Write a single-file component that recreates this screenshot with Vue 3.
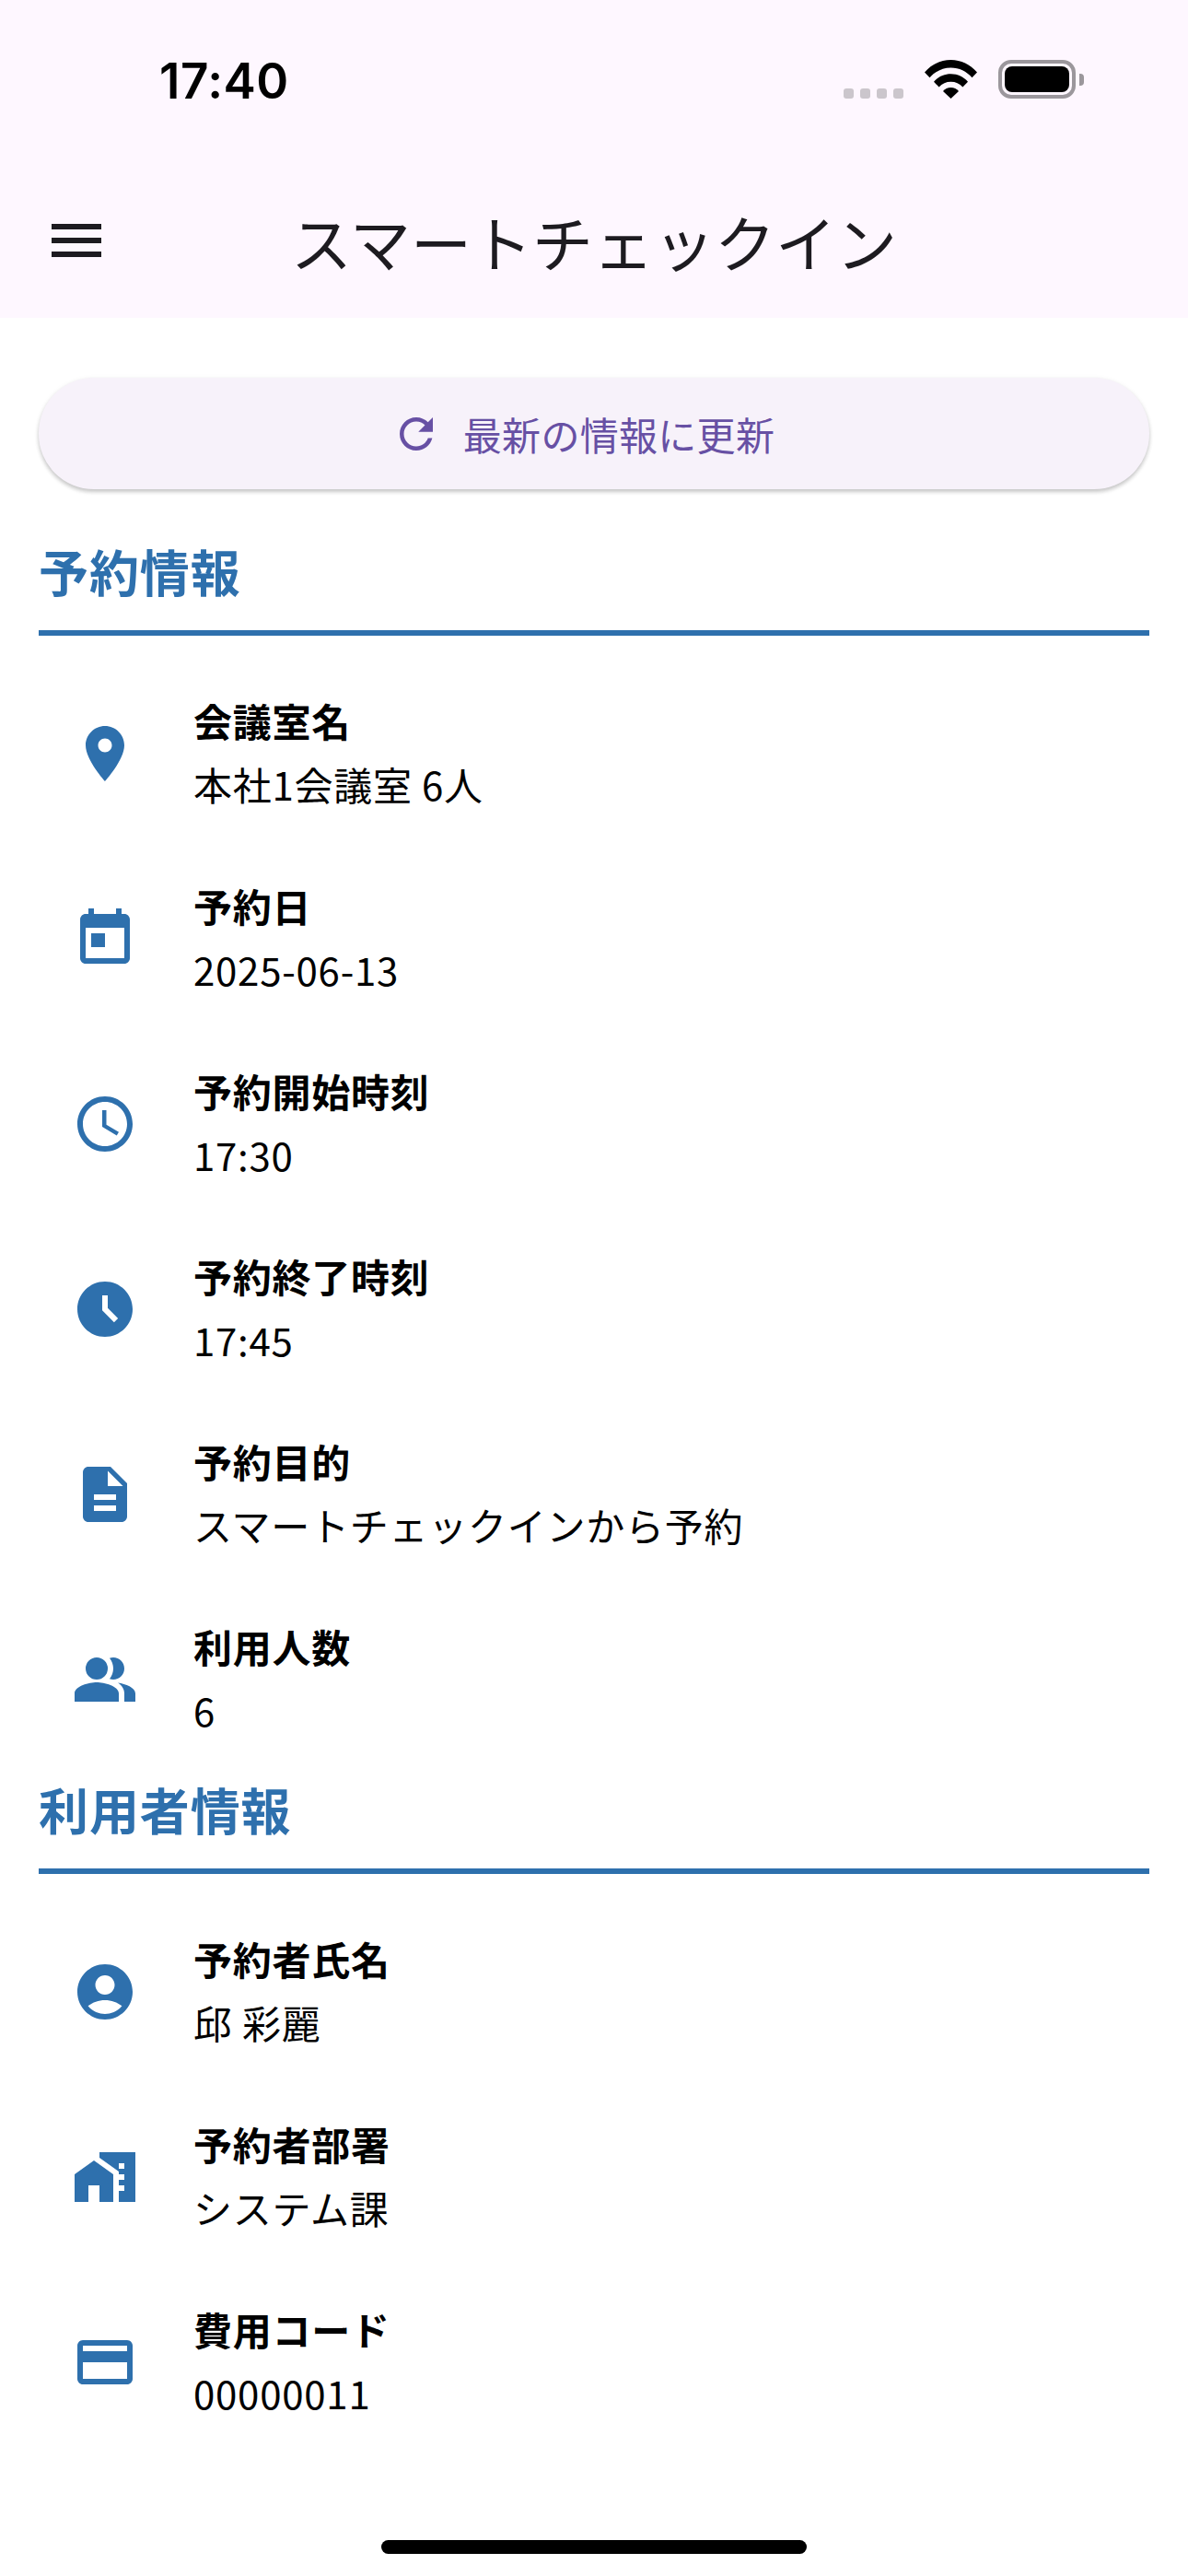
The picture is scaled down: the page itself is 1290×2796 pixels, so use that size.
<template>
  <div class="screen">
    <header class="top">
      <div class="status">
        <span class="time">17:40</span>
        <div class="status-icons">
          <div class="dots"><i></i><i></i><i></i><i></i></div>
          <svg class="wifi" viewBox="0 0 57 42">
            <path d="M0 13.5C7.5 5 17.5 0 28.5 0S49.5 5 57 13.5l-5.5 5.7C45.500 12.500 37.500 8.500 28.500 8.500S11.500 12.500 5.500 19.200z" />
            <path d="M10 23.800C14.500 18.500 21 15.300 28.500 15.300S42.500 18.500 47 23.800l-5.600 5.800C38 25.800 33.500 23.800 28.500 23.800S19 25.800 15.600 29.600z" />
            <path d="M20 34c2.200-2.500 5-4 8.500-4s6.300 1.500 8.500 4l-8.500 8z" />
          </svg>
          <div class="battery"><div class="battery-fill"></div></div>
          <div class="battery-nub"></div>
        </div>
      </div>
      <div class="appbar">
        <svg class="menu" viewBox="0 0 24 24"><path :d="menuPath" /></svg>
        <h1 class="title">スマートチェックイン</h1>
      </div>
    </header>

    <main class="content">
      <button class="refresh">
        <svg class="refresh-icon" viewBox="0 0 24 24"><path :d="refreshPath" /></svg>
        <span>最新の情報に更新</span>
      </button>

      <section v-for="section in sections" :key="section.title" class="section">
        <h2 class="section-title">{{ section.title }}</h2>
        <div class="rows">
          <div v-for="row in section.rows" :key="row.label" class="row">
            <svg class="row-icon" viewBox="0 0 24 24"><path :d="row.icon" /></svg>
            <div class="row-text">
              <div class="label">{{ row.label }}</div>
              <div class="value">{{ row.value }}</div>
            </div>
          </div>
        </div>
      </section>
    </main>

    <div class="home-bar"></div>
  </div>
</template>

<script setup>
const menuPath = "M3 18h18v-2H3v2zm0-5h18v-2H3v2zm0-7v2h18V6H3z";
const refreshPath =
  "M17.65 6.35C16.2 4.9 14.21 4 12 4c-4.42 0-7.99 3.58-7.99 8s3.57 8 7.99 8c3.73 0 6.84-2.55 7.73-6h-2.08c-.82 2.33-3.04 4-5.65 4-3.31 0-6-2.69-6-6s2.69-6 6-6c1.66 0 3.14.69 4.22 1.78L13 11h7V4l-2.35 2.35z";

const icons = {
  place:
    "M12 2C8.13 2 5 5.13 5 9c0 5.25 7 13 7 13s7-7.75 7-13c0-3.87-3.13-7-7-7zm0 9.5c-1.38 0-2.5-1.12-2.5-2.5s1.12-2.5 2.5-2.5 2.5 1.12 2.5 2.5-1.12 2.5-2.5 2.5z",
  today:
    "M19 3h-1V1h-2v2H8V1H6v2H5c-1.11 0-1.99.9-1.99 2L3 19c0 1.1.89 2 2 2h14c1.1 0 2-.9 2-2V5c0-1.1-.9-2-2-2zm0 16H5V8h14v11zM7 10h5v5H7z",
  time: "M11.99 2C6.47 2 2 6.48 2 12s4.47 10 9.99 10C17.52 22 22 17.52 22 12S17.52 2 11.99 2zM12 20c-4.42 0-8-3.58-8-8s3.58-8 8-8 8 3.58 8 8-3.58 8-8 8zm.5-13H11v6l5.25 3.15.75-1.23-4.5-2.67z",
  timeFilled:
    "M11.99 2C6.47 2 2 6.48 2 12s4.47 10 9.99 10C17.52 22 22 17.52 22 12S17.52 2 11.99 2zM15.29 16.71L11 12.41V7h2v4.59l3.71 3.71-1.42 1.41z",
  description:
    "M14 2H6c-1.1 0-1.99.9-1.99 2L4 20c0 1.1.89 2 2 2h12c1.1 0 2-.9 2-2V8l-6-6zm2 16H8v-2h8v2zm0-4H8v-2h8v2zm-3-5V3.5L18.5 9H13z",
  people:
    "M16.67 13.13C18.04 14.06 19 15.32 19 17v3h4v-3c0-2.18-3.57-3.47-6.33-3.87zM9 4a4 4 0 1 0 0 8 4 4 0 0 0 0-8zM15 12c2.21 0 4-1.79 4-4s-1.79-4-4-4c-.47 0-.91.1-1.33.24C14.5 5.27 15 6.58 15 8s-.5 2.73-1.33 3.76c.42.14.86.24 1.33.24zM9 13c-2.67 0-8 1.34-8 4v3h16v-3c0-2.66-5.33-4-8-4z",
  account:
    "M12 2C6.48 2 2 6.48 2 12s4.48 10 10 10 10-4.48 10-10S17.52 2 12 2zm0 4c1.93 0 3.5 1.57 3.5 3.5S13.93 13 12 13s-3.5-1.57-3.5-3.5S10.07 6 12 6zm0 14c-2.03 0-4.43-.82-6.14-2.88C7.55 15.8 9.68 15 12 15s4.45.8 6.14 2.12C16.43 19.18 14.03 20 12 20z",
  homeWork:
    "M1 11v10h5v-6h4v6h5V11L8 6zM10 3v1.97l7 5V11h2v2h-2v2h2v2h-2v4h6V3H10zm9 6h-2V7h2v2z",
  card: "M20 4H4c-1.11 0-1.99.89-1.99 2L2 18c0 1.11.89 2 2 2h16c1.11 0 2-.89 2-2V6c0-1.11-.89-2-2-2zm0 14H4v-6h16v6zm0-10H4V6h16v2z",
};

const sections = [
  {
    title: "予約情報",
    rows: [
      { icon: icons.place, label: "会議室名", value: "本社1会議室 6人" },
      { icon: icons.today, label: "予約日", value: "2025-06-13" },
      { icon: icons.time, label: "予約開始時刻", value: "17:30" },
      { icon: icons.timeFilled, label: "予約終了時刻", value: "17:45" },
      { icon: icons.description, label: "予約目的", value: "スマートチェックインから予約" },
      { icon: icons.people, label: "利用人数", value: "6" },
    ],
  },
  {
    title: "利用者情報",
    rows: [
      { icon: icons.account, label: "予約者氏名", value: "邱 彩麗" },
      { icon: icons.homeWork, label: "予約者部署", value: "システム課" },
      { icon: icons.card, label: "費用コード", value: "00000011" },
    ],
  },
];
</script>

<style>
html,
body {
  margin: 0;
  background: #ffffff;
}
</style>

<style scoped>
.screen {
  position: relative;
  width: 1290px;
  height: 2796px;
  overflow: hidden;
  background: #ffffff;
  font-family: "Noto Sans CJK JP", "Noto Sans", sans-serif;
}

.top {
  height: 345px;
  background: #fef7ff;
}

.status {
  height: 177px;
  box-sizing: border-box;
  display: flex;
  justify-content: space-between;
  padding: 65px 113px 0 173px;
}

.time {
  font-family: Inter, sans-serif;
  font-weight: 600;
  font-size: 53px;
  line-height: 46px;
  letter-spacing: 0.5px;
  color: #000000;
}

.status-icons {
  display: flex;
  align-items: flex-start;
}

.dots {
  display: flex;
  gap: 7px;
  margin-top: 31px;
  margin-right: 23px;
}

.dots i {
  width: 11px;
  height: 11px;
  border-radius: 3px;
  background: #cbc6cc;
}

.wifi {
  width: 57px;
  height: 42px;
  margin-right: 23px;
  fill: #000000;
}

.battery {
  width: 84px;
  height: 42px;
  box-sizing: border-box;
  border: 4px solid #9b979c;
  border-radius: 14px;
  padding: 3px;
}

.battery-fill {
  height: 100%;
  border-radius: 8px;
  background: #000000;
}

.battery-nub {
  width: 5px;
  height: 13px;
  margin: 15px 0 0 4px;
  border-radius: 0 4px 4px 0;
  background: #9b979c;
}

.appbar {
  display: flex;
  align-items: center;
  height: 168px;
  padding-left: 47px;
}

.menu {
  width: 72px;
  height: 72px;
  fill: #1d1b20;
  flex: none;
}

.title {
  margin: 0 0 0 197px;
  font-size: 66px;
  font-weight: 400;
  line-height: 88px;
  color: #1d1b20;
}

.content {
  padding: 65px 42px 0;
}

.refresh {
  width: 100%;
  height: 121px;
  display: flex;
  align-items: center;
  justify-content: center;
  gap: 24px;
  padding: 0 24px 0 0;
  border: none;
  border-radius: 60px;
  background: #f7f2fa;
  box-shadow: 0 3px 4px rgba(0, 0, 0, 0.2), 0 1px 6px rgba(0, 0, 0, 0.05);
  color: #6750a4;
  font-family: inherit;
  font-size: 42px;
  line-height: 56px;
  letter-spacing: 0.3px;
}

.refresh-icon {
  width: 54px;
  height: 54px;
  fill: #6750a4;
}

.section {
  margin-top: 52px;
}

.section + .section {
  margin-top: 4px;
}

.section-title {
  margin: -2px 0 0;
  padding-bottom: 25px;
  border-bottom: 6px solid #2e70ad;
  font-size: 54px;
  font-weight: 700;
  line-height: 78px;
  letter-spacing: 0.9px;
  color: #2e70ad;
}

.rows {
  padding-top: 27px;
}

.row {
  display: flex;
  align-items: center;
  height: 201px;
  padding-left: 36px;
}

.row-icon {
  width: 72px;
  height: 72px;
  flex: none;
  fill: #2e70ad;
}

.row-text {
  margin-left: 60px;
  padding-bottom: 3px;
  color: #000000;
  font-size: 42px;
  line-height: 69px;
  letter-spacing: 0.75px;
}

.label {
  font-weight: 700;
}

.value {
  font-weight: 400;
}

.home-bar {
  position: absolute;
  left: 414px;
  bottom: 24px;
  width: 462px;
  height: 15px;
  border-radius: 8px;
  background: #000000;
}
</style>
